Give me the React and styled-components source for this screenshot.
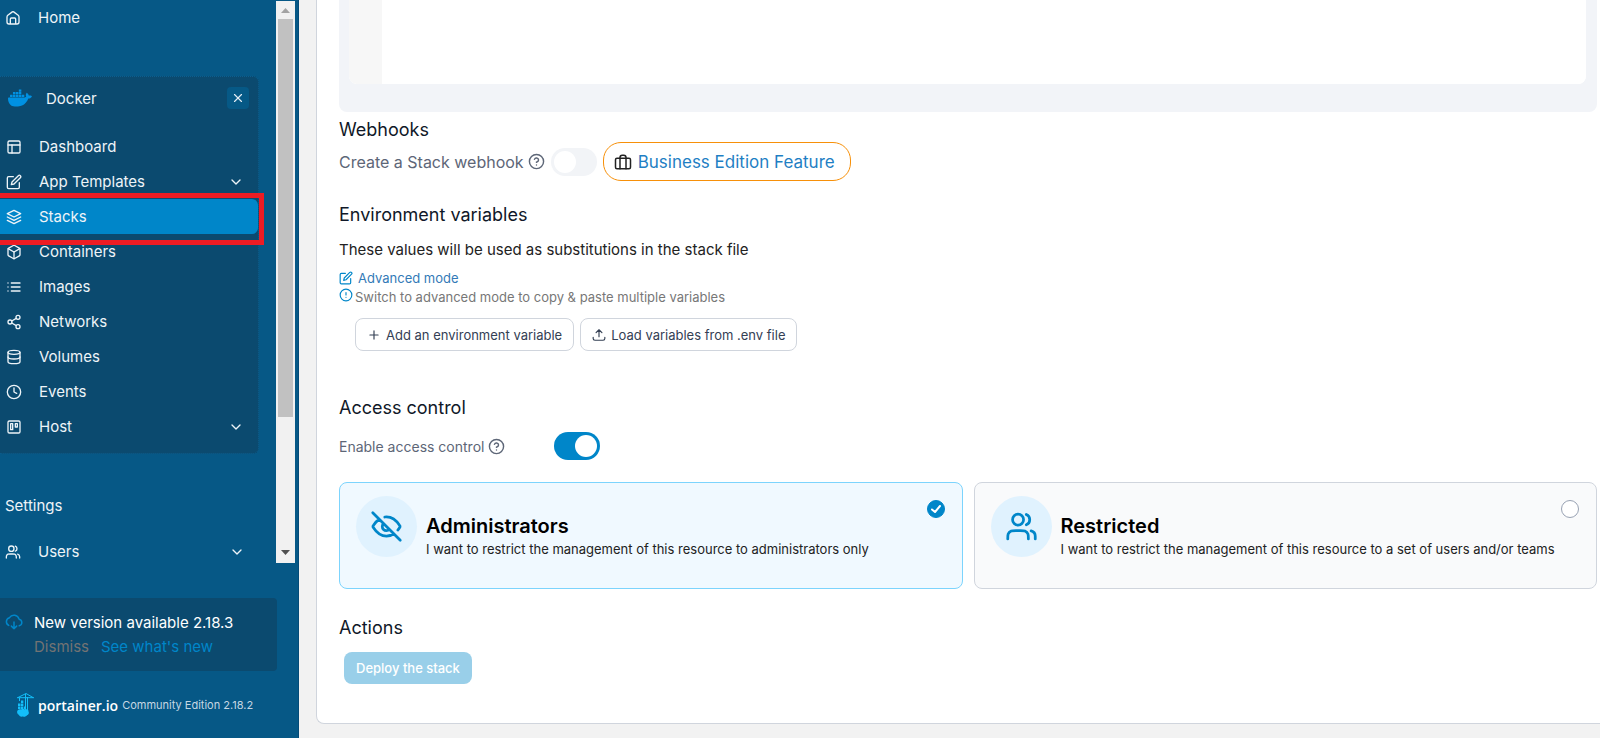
import styled, { createGlobalStyle } from "styled-components";
import { SiDocker } from "react-icons/si";
import {
  FiAlertCircle,
  FiBox,
  FiChevronDown,
  FiClock,
  FiDatabase,
  FiEdit,
  FiHelpCircle,
  FiLayers,
  FiLayout,
  FiList,
  FiPlus,
  FiShare2,
  FiTrello,
  FiX,
} from "react-icons/fi";

const GlobalStyle = createGlobalStyle`
  * {
    box-sizing: border-box;
  }
  body {
    margin: 0;
    background-color: #f2f2f2;
    font-family: Inter, "Liberation Sans", sans-serif;
    font-size: 14px;
  }
  button {
    font-family: inherit;
    cursor: pointer;
  }
  a {
    text-decoration: none;
  }
  svg {
    flex-shrink: 0;
  }
`;

const Page = styled.div`
  display: flex;
  min-height: 100vh;
`;

/* sidebar */

const Sidebar = styled.aside`
  width: 299px;
  flex-shrink: 0;
  display: flex;
  flex-direction: column;
  background-color: #065886;
  border-right: 1px solid #044b78;
  color: #eef4f8;
`;

const ScrollArea = styled.div`
  display: flex;
  justify-content: space-between;
  height: 563px;
  padding-right: 3px;
`;

const Nav = styled.nav`
  width: 259px;
`;

const NavItem = styled.a`
  display: flex;
  align-items: center;
  gap: 17px;
  height: 35px;
  padding: 0 14px 0 ${(props) => (props.$outer ? "5px" : "6px")};
  border-radius: 0 6px 6px 0;
  background-color: ${(props) => (props.$active ? "#0086c9" : "transparent")};
  color: inherit;
  font-size: 15px;
`;

const NavLabel = styled.span`
  flex: 1;
`;

const Group = styled.div`
  margin-top: 41px;
  height: 378px;
  border: 1px dotted #0b5f90;
  border-left: none;
  border-radius: 0 6px 6px 0;
  background-color: #0b4a6f;
`;

const GroupHeader = styled.div`
  display: flex;
  align-items: center;
  gap: 14px;
  height: 42px;
  margin-bottom: 10px;
  padding: 0 9px 0 8px;
  font-size: 15px;
`;

const CloseButton = styled.button`
  display: flex;
  align-items: center;
  justify-content: center;
  width: 22px;
  height: 22px;
  padding: 0;
  border: none;
  border-radius: 4px;
  background-color: #065986;
  color: #e3edf4;
`;

const ActiveFrame = styled.div`
  position: relative;

  &::after {
    content: "";
    position: absolute;
    inset: -6px -6px -11px -6px;
    border: 5px solid #ed1c24;
    pointer-events: none;
    z-index: 1;
  }
`;

const NavTitle = styled.div`
  margin: 40px 0 16px;
  padding-left: 5px;
  font-size: 15px;
  line-height: 24px;
`;

const ScrollBar = styled.div`
  display: flex;
  flex-direction: column;
  align-items: center;
  width: 19px;
  margin-top: 1px;
  padding: 7px 0 8px;
  background-color: #f1f1f1;
`;

const Thumb = styled.div`
  width: 15px;
  height: 398px;
  margin: 6px 0 auto;
  background-color: #c1c1c1;
`;

const UpdateBox = styled.section`
  display: flex;
  align-items: flex-start;
  gap: 11px;
  width: 277px;
  margin-top: 35px;
  padding: 13px 5px 12px;
  border-radius: 0 4px 4px 0;
  background-color: #0b4a6f;
  font-size: 15px;
  line-height: 24px;
  color: #fff;
`;

const UpdateIcon = styled.span`
  display: flex;
  padding-top: 2px;
  color: #0086c9;
`;

const UpdateLinks = styled.div`
  display: flex;
  gap: 12px;

  a {
    color: #0086c9;
  }
`;

const DismissButton = styled.button`
  padding: 0;
  border: none;
  background: none;
  font-size: 15px;
  line-height: 24px;
  color: #737373;
`;

const Footer = styled.footer`
  display: flex;
  align-items: center;
  gap: 4px;
  margin-top: 22px;
  padding-left: 16px;
  font-size: 11px;
  color: #c5d7e3;
`;

const Brand = styled.strong`
  font-family: "Open Sans", Inter, sans-serif;
  font-size: 14px;
  font-weight: 600;
  color: #fff;
`;

/* main */

const Main = styled.main`
  flex: 1;
  min-width: 0;
  padding: 0 0 14px 17px;
`;

const Card = styled.form`
  display: flex;
  flex-direction: column;
  height: 100%;
  padding: 0 3px 36px 22px;
  border: 1px solid #d0d5dd;
  border-width: 0 0 1px 1px;
  border-radius: 0 0 0 8px;
  background-color: #fff;
`;

const Editor = styled.div`
  padding: 0 11px 28px 10px;
  border-radius: 0 0 8px 8px;
  background-color: #f2f4f8;
`;

const CodeArea = styled.div`
  display: flex;
  height: 84px;
  border-radius: 0 0 8px 8px;
  background-color: #fff;
  overflow: hidden;
`;

const Gutter = styled.div`
  width: 33px;
  background-color: #f7f7f7;
`;

const CodeInput = styled.textarea`
  flex: 1;
  border: none;
  outline: none;
  resize: none;
`;

const SectionTitle = styled.h2`
  margin: ${(props) => props.$top || "0"} 0 0;
  font-size: 18px;
  font-weight: 400;
  line-height: 24px;
  color: #101828;
`;

const Row = styled.div`
  display: flex;
  align-items: center;
  gap: 6px;
  margin-top: ${(props) => props.$top || "0"};
`;

const FieldLabel = styled.label`
  display: flex;
  align-items: center;
  gap: 4px;
  width: ${(props) => props.$width || "auto"};
  font-size: ${(props) => props.$size || "14px"};
  color: #5d6677;
`;

const Switch = styled.input`
  appearance: none;
  display: flex;
  width: 46px;
  height: 28px;
  margin: 0;
  padding: 3px;
  border-radius: 14px;
  background-color: #f2f4f7;

  &::before {
    content: "";
    width: 22px;
    height: 22px;
    border-radius: 50%;
    background-color: #fff;
  }

  &:checked {
    justify-content: flex-end;
    background-color: #0086c9;
  }
`;

const FeatureLink = styled.a`
  display: flex;
  align-items: center;
  gap: 6px;
  height: 39px;
  padding: 0 15px 0 10px;
  border: 1px solid #f79009;
  border-radius: 18px;
  font-size: 17px;
  color: #1f7fc4;

  svg {
    color: #222;
  }
`;

const Text = styled.p`
  margin: 11px 0 6px;
  font-size: 15px;
  line-height: 24px;
  color: #222;
`;

const ModeButton = styled.button`
  display: flex;
  align-items: center;
  align-self: flex-start;
  gap: 5px;
  padding: 0;
  border: none;
  background: none;
  font-size: 13px;
  line-height: 20px;
  color: #337ab7;

  svg {
    color: #0086c9;
  }
`;

const Hint = styled.div`
  display: flex;
  align-items: flex-start;
  gap: 2px;
  font-size: 13px;
  line-height: 19px;
  color: #777;

  svg {
    color: #0086c9;
  }
`;

const ButtonRow = styled.div`
  display: flex;
  gap: 6px;
  margin: 11px 0 0 16px;
`;

const OutlineButton = styled.button`
  display: flex;
  align-items: center;
  gap: 5px;
  height: 33px;
  padding: 0 11px;
  border: 1px solid #d0d5dd;
  border-radius: 8px;
  background-color: #fff;
  font-size: 13px;
  color: #344054;
`;

const Options = styled.div`
  display: grid;
  grid-template-columns: 1fr 1fr;
  gap: 11px;
  margin-top: 22px;
`;

const Option = styled.label`
  display: flex;
  gap: 9px;
  height: 107px;
  padding: 13px 17px 13px 16px;
  border: 1px solid ${(props) => (props.$selected ? "#7cd4fd" : "#d0d5dd")};
  border-radius: 8px;
  background-color: ${(props) => (props.$selected ? "#f0f9ff" : "#f9fafb")};
`;

const OptionIcon = styled.span`
  display: flex;
  align-items: center;
  justify-content: center;
  width: 61px;
  height: 61px;
  border-radius: 50%;
  background-color: #e0f2fe;
  color: #0086c9;
  flex-shrink: 0;
`;

const OptionBody = styled.span`
  flex: 1;
  min-width: 0;
  padding-top: 17px;
  font-size: 13px;
  line-height: 20px;
  color: #222;
  white-space: nowrap;
`;

const OptionTitle = styled.strong`
  display: block;
  font-size: 20px;
  font-weight: 600;
  line-height: 26px;
  color: #000;
`;

const Radio = styled.input`
  appearance: none;
  flex-shrink: 0;
  width: 18px;
  height: 18px;
  margin: 4px 0 0 -18px;
  border: 1px solid #98a2b3;
  border-radius: 50%;
  background-color: #fff;

  &:checked {
    border-color: #0086c9;
    background: #0086c9
      url("data:image/svg+xml,%3Csvg xmlns='http://www.w3.org/2000/svg' viewBox='0 0 16 16' fill='none' stroke='white' stroke-width='2' stroke-linecap='round' stroke-linejoin='round'%3E%3Cpath d='M4 8.5l3 2.5 5-6'/%3E%3C/svg%3E");
  }
`;

const DeployButton = styled.button`
  align-self: flex-start;
  height: 32px;
  margin: 12px 0 0 5px;
  padding: 0 12px;
  border: none;
  border-radius: 8px;
  background-color: #99cfe9;
  font-size: 13px;
  font-weight: 500;
  color: #fff;
`;

const StrokeIcon = ({ size, children }) => (
  <svg
    width={size}
    height={size}
    viewBox="0 0 24 24"
    fill="none"
    stroke="currentColor"
    strokeWidth="2"
    strokeLinecap="round"
    strokeLinejoin="round"
    aria-hidden="true"
  >
    {children}
  </svg>
);

const HomeIcon = () => (
  <StrokeIcon size={16}>
    <path d="M8 21v-7.400c0-.9.700-1.600 1.600-1.600h4.800c.9 0 1.600.7 1.600 1.600V21M11 2.800L4.200 8c-.8.600-1.200 1.500-1.200 2.500V18a3 3 0 0 0 3 3h12a3 3 0 0 0 3-3v-7.500c0-1-.4-1.900-1.200-2.500L13 2.800a1.700 1.700 0 0 0-2 0z" />
  </StrokeIcon>
);

const UsersIcon = ({ size }) => (
  <StrokeIcon size={size}>
    <path d="M22 21v-2a4 4 0 0 0-3-3.870M15.500 3.300a4 4 0 0 1 0 7.400M17 21c0-1.900 0-2.800-.3-3.500a4 4 0 0 0-2.200-2.200C13.800 15 12.900 15 11 15H8c-1.900 0-2.800 0-3.500.3a4 4 0 0 0-2.200 2.200C2 18.200 2 19.100 2 21" />
    <circle cx="9.500" cy="7" r="4" />
  </StrokeIcon>
);

const EyeOffIcon = () => (
  <StrokeIcon size={33}>
    <path d="M10.740 5.090C11.150 5.030 11.570 5 12 5c5.100 0 8.450 4.500 9.580 6.290.14.210.2.320.24.480a1 1 0 0 1 0 .46c-.04.160-.1.270-.24.490-.3.470-.76 1.140-1.370 1.860M6.720 6.720c-2.160 1.460-3.630 3.500-4.300 4.570-.14.210-.2.320-.24.480a1 1 0 0 0 0 .46c.04.160.1.270.24.490C3.550 14.500 6.900 19 12 19c2.060 0 3.830-.73 5.290-1.720M2 2l20 20M9.880 9.880a3 3 0 1 0 4.240 4.240" />
  </StrokeIcon>
);

const CloudIcon = () => (
  <StrokeIcon size={18}>
    <path d="M5 16.500A5.500 5.500 0 0 1 6 6.200a7 7 0 0 1 12.700 2A4.500 4.500 0 0 1 19 17M8.500 17.500L12 21l3.500-3.500M12 12v9" />
  </StrokeIcon>
);

const LuggageIcon = () => (
  <StrokeIcon size={18}>
    <rect x="2" y="7" width="20" height="14" rx="2" />
    <path d="M8 21V6c0-2 1-3 3-3h2c2 0 3 1 3 3v15" />
  </StrokeIcon>
);

const UploadIcon = () => (
  <StrokeIcon size={14}>
    <path d="M2 16v2c0 2 1 3 3 3h14c2 0 3-1 3-3v-2M7 8l5-5 5 5M12 3v12" />
  </StrokeIcon>
);

const CraneLogo = () => (
  <svg width="18" height="24" viewBox="0 0 18 24" fill="#13bef9" aria-hidden="true">
    <path
      d="M10 .5L2 4.500M10 .5L17 4.500M1 4.700h17M3.500 5v3M9.500 1v16M11.500 4v14"
      fill="none"
      stroke="#13bef9"
      strokeWidth="1"
    />
    <path d="M5 7.500h2.300V10H5zM2 10.500h2.500V13H2zM5 10.500h2.300V13H5zM2 13.500h2.500V16H2zM5 13.500h2.300V16H5zM8 13.500h1.500V16H8z" />
    <path d="M2 17c1-1 2-1 3-.5C6 15.500 8 15.500 9 16.500c2-.8 4 .5 3.500 2 1 1.500 0 3.500-1.500 3.700-1 1.300-2.500 1.800-4 1.300-2 .5-3.500-.2-4-1.500C.8 21 .5 18 2 17z" />
  </svg>
);

const menu = [
  { label: "Dashboard", Icon: FiLayout },
  { label: "App Templates", Icon: FiEdit, expandable: true },
  { label: "Stacks", Icon: FiLayers, active: true },
  { label: "Containers", Icon: FiBox },
  { label: "Images", Icon: FiList },
  { label: "Networks", Icon: FiShare2 },
  { label: "Volumes", Icon: FiDatabase },
  { label: "Events", Icon: FiClock },
  { label: "Host", Icon: FiTrello, expandable: true },
];

const MenuEntry = ({ label, Icon, expandable, active }) => {
  const item = (
    <NavItem href="#" $active={active}>
      <Icon size={16} />
      <NavLabel>{label}</NavLabel>
      {expandable && <FiChevronDown size={16} />}
    </NavItem>
  );
  return active ? <ActiveFrame>{item}</ActiveFrame> : item;
};

const App = () => {
  return (
    <Page>
      <GlobalStyle />
      <Sidebar>
        <ScrollArea>
          <Nav>
            <NavItem href="#" $outer>
              <HomeIcon />
              <NavLabel>Home</NavLabel>
            </NavItem>
            <Group>
              <GroupHeader>
                <SiDocker size={24} color="#0091e2" />
                <NavLabel>Docker</NavLabel>
                <CloseButton type="button" aria-label="Close">
                  <FiX size={14} />
                </CloseButton>
              </GroupHeader>
              {menu.map((entry) => (
                <MenuEntry key={entry.label} {...entry} />
              ))}
            </Group>
            <NavTitle>Settings</NavTitle>
            <NavItem href="#" $outer>
              <UsersIcon size={16} />
              <NavLabel>Users</NavLabel>
              <FiChevronDown size={16} />
            </NavItem>
          </Nav>
          <ScrollBar>
            <svg width="9" height="5" viewBox="0 0 9 5" fill="#a3a3a3">
              <path d="M0 5l4.500-5L9 5z" />
            </svg>
            <Thumb />
            <svg width="9" height="5" viewBox="0 0 9 5" fill="#505050">
              <path d="M0 0l4.500 5L9 0z" />
            </svg>
          </ScrollBar>
        </ScrollArea>
        <UpdateBox>
          <UpdateIcon>
            <CloudIcon />
          </UpdateIcon>
          <div>
            <div>New version available 2.18.3</div>
            <UpdateLinks>
              <DismissButton type="button">Dismiss</DismissButton>
              <a href="#">See what's new</a>
            </UpdateLinks>
          </div>
        </UpdateBox>
        <Footer>
          <CraneLogo />
          <Brand>portainer.io</Brand>
          <span>Community Edition 2.18.2</span>
        </Footer>
      </Sidebar>
      <Main>
        <Card>
          <Editor>
            <CodeArea>
              <Gutter />
              <CodeInput aria-label="Stack file" />
            </CodeArea>
          </Editor>
          <SectionTitle $top="6px">Webhooks</SectionTitle>
          <Row>
            <FieldLabel htmlFor="webhook" $size="16px">
              Create a Stack webhook
              <FiHelpCircle size={17} />
            </FieldLabel>
            <Switch type="checkbox" id="webhook" />
            <FeatureLink href="#">
              <LuggageIcon />
              Business Edition Feature
            </FeatureLink>
          </Row>
          <SectionTitle $top="22px">Environment variables</SectionTitle>
          <Text>These values will be used as substitutions in the stack file</Text>
          <ModeButton type="button">
            <FiEdit size={14} />
            Advanced mode
          </ModeButton>
          <Hint>
            <FiAlertCircle size={14} />
            Switch to advanced mode to copy & paste multiple variables
          </Hint>
          <ButtonRow>
            <OutlineButton type="button">
              <FiPlus size={14} />
              Add an environment variable
            </OutlineButton>
            <OutlineButton type="button">
              <UploadIcon />
              Load variables from .env file
            </OutlineButton>
          </ButtonRow>
          <SectionTitle $top="45px">Access control</SectionTitle>
          <Row $top="12px">
            <FieldLabel htmlFor="access" $width="209px">
              Enable access control
              <FiHelpCircle size={17} />
            </FieldLabel>
            <Switch type="checkbox" id="access" defaultChecked />
          </Row>
          <Options>
            <Option $selected>
              <OptionIcon>
                <EyeOffIcon />
              </OptionIcon>
              <OptionBody>
                <OptionTitle>Administrators</OptionTitle>
                I want to restrict the management of this resource to administrators only
              </OptionBody>
              <Radio type="radio" name="ownership" defaultChecked />
            </Option>
            <Option>
              <OptionIcon>
                <UsersIcon size={33} />
              </OptionIcon>
              <OptionBody>
                <OptionTitle>Restricted</OptionTitle>
                I want to restrict the management of this resource to a set of users and/or teams
              </OptionBody>
              <Radio type="radio" name="ownership" />
            </Option>
          </Options>
          <SectionTitle $top="27px">Actions</SectionTitle>
          <DeployButton type="button">Deploy the stack</DeployButton>
        </Card>
      </Main>
    </Page>
  );
};

export default App;
